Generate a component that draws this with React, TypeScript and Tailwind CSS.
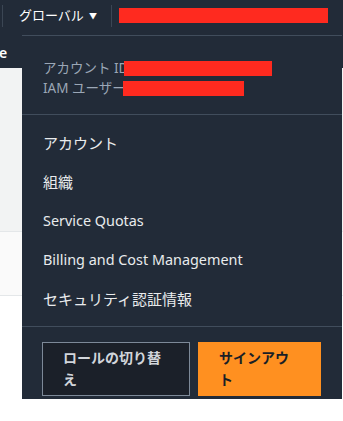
export default function App() {
  const items = [
    { label: "アカウント", latin: false },
    { label: "組織", latin: false },
    { label: "Service Quotas", latin: true },
    { label: "Billing and Cost Management", latin: true },
    { label: "セキュリティ認証情報", latin: false },
  ];

  return (
    <div
      className="relative h-[421px] w-[343px] overflow-hidden bg-white"
      style={{ fontFamily: '"Noto Sans", "Noto Sans CJK JP", sans-serif' }}
    >
      {/* Top nav */}
      <div className="flex h-[36px] items-start bg-[#222b38]">
        <div className="ml-[2px] mt-[5px] h-[22px] w-px bg-[#3b4654]" />
        <div className="ml-[16px] flex h-[32px] w-[92px] items-center gap-[5px] text-[13px] text-white">
          <span>グローバル</span>
          <span className="text-[8px]">▼</span>
        </div>
        <div className="mt-[5px] h-[22px] w-px bg-[#3b4654]" />
        <div className="ml-[7px] mt-[8px] h-[15px] w-[209px] bg-[#ff2a1f]" />
      </div>

      {/* Secondary bar behind the menu */}
      <div className="flex h-[32px] items-center bg-[#222b38]">
        <span className="-ml-px text-[14px] font-semibold text-white">e</span>
      </div>

      {/* Page content behind the menu */}
      <div className="h-[164px] border-b border-[#e4e7e9] bg-[#f2f3f3]" />
      <div className="h-[64px] border-b border-[#e4e7e9] bg-[#fafafa]" />

      {/* Account dropdown */}
      <div className="absolute left-[22px] top-[35px] w-[320px] border-t border-[#414d5c] bg-[#222b38]">
        <div className="flex flex-col px-[21px] pb-[16px] pt-[22px] text-[13.5px] leading-[20px] text-[#9ba7b6]">
          <div className="flex items-center">
            <span>アカウント ID</span>
            <span className="-ml-[4px] h-[15px] w-[148px] bg-[#ff2a1f]" />
          </div>
          <div className="flex items-center">
            <span>IAM ユーザー</span>
            <span className="-ml-[3px] h-[15px] w-[121px] bg-[#ff2a1f]" />
          </div>
        </div>
        <div className="h-px bg-[#414d5c]" />
        <ul className="flex flex-col gap-[19px] px-[21px] pb-[17px] pt-[18px] leading-[20px] text-[#e9ebed]">
          {items.map((item) => (
            <li
              key={item.label}
              className={item.latin ? "text-[14.4px]" : "text-[15px]"}
            >
              {item.label}
            </li>
          ))}
        </ul>
        <div className="h-px bg-[#414d5c]" />
        <div className="flex gap-2 px-[20px] pb-[3px] pt-[15px]">
          <button className="w-[148px] border border-[#7d8998] bg-[#1b2029] px-5 py-1 text-left text-[14px] font-bold leading-[22px] text-[#d1d5db]">
            ロールの切り替え
          </button>
          <button className="w-[123px] border border-[#ff9020] bg-[#ff9020] px-5 py-1 text-left text-[14px] font-bold leading-[22px] text-[#1a1f26]">
            サインアウト
          </button>
        </div>
      </div>
    </div>
  );
}
